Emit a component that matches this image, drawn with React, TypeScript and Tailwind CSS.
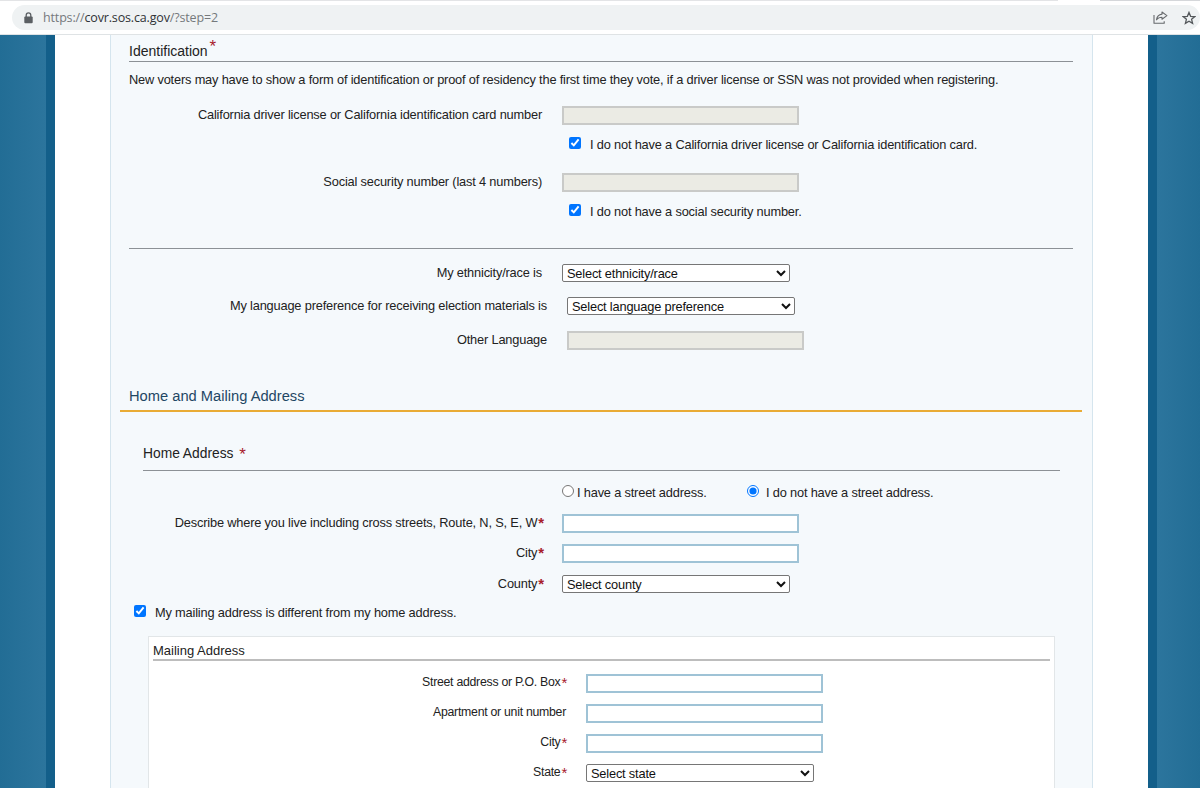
import React from "react";
import clsx from "clsx";

function Star({ className }: { className?: string }) {
  return <span className={clsx("text-[#a8202c]", className)}>*</span>;
}

function Row({
  label,
  required,
  className,
  labelClass = "w-[431px]",
  starClass = "ml-px align-[-1px] text-[15px] leading-none font-bold",
  children,
}: {
  label: string;
  required?: boolean;
  className?: string;
  labelClass?: string;
  starClass?: string;
  children: React.ReactNode;
}) {
  return (
    <div className={clsx("flex items-start", className)}>
      <label className={clsx("shrink-0 text-right whitespace-nowrap", labelClass)}>
        {label}
        {required && <Star className={starClass} />}
      </label>
      {children}
    </div>
  );
}

function TextInput({ disabled, className }: { disabled?: boolean; className?: string }) {
  return (
    <input
      type="text"
      disabled={disabled}
      className={clsx(
        "h-[19px] w-[237px] shrink-0 border-2",
        disabled ? "border-[#c9cac8] bg-[#ebebe4]" : "border-[#9fc3d6] bg-white",
        className
      )}
    />
  );
}

function Select({ text, className }: { text: string; className?: string }) {
  return (
    <select
      className={clsx(
        "h-[18px] w-[228px] shrink-0 rounded-[2px] border border-[#767676] bg-white text-[12.8px] leading-4 tracking-[-0.18px] text-[#111]",
        className
      )}
    >
      <option>{text}</option>
    </select>
  );
}

function Check({ text, className }: { text: string; className?: string }) {
  return (
    <label className={clsx("flex items-start whitespace-nowrap", className)}>
      <input type="checkbox" defaultChecked className="m-0 mr-[9px] size-3 shrink-0" />
      <span className="-mt-px">{text}</span>
    </label>
  );
}

function AddressBar() {
  return (
    <div className="flex h-[35px] flex-col border-b border-[#dfe3e5] bg-white">
      <div className="flex h-px justify-between">
        <div className="w-[1058px] bg-[#e3e4e6]" />
        <div className="w-[100px] bg-[#d5d7da]" />
      </div>
      <div className="mt-1 ml-3 flex h-[25px] items-center rounded-full bg-[#eff2f3] pr-[4px] pl-3">
        <svg width="9" height="12" viewBox="0 0 9 12" className="shrink-0">
          <path d="M2.2 5V3.2a2.3 2.3 0 0 1 4.6 0V5" fill="none" stroke="#5b5f63" strokeWidth="1.3" />
          <rect x="0.3" y="4.4" width="8.4" height="6.8" rx="1" fill="#5b5f63" />
        </svg>
        <span className="ml-[10px] font-['Open_Sans',sans-serif] text-[12.5px] leading-4 tracking-[-0.15px] text-[#75797c]">
          https://<span className="text-[#303336]">covr.sos.ca.gov</span>/?step=2
        </span>
        <svg
          width="15"
          height="13"
          viewBox="0 0 15 13"
          fill="none"
          stroke="#66696c"
          strokeWidth="1.1"
          strokeLinejoin="round"
          className="ml-auto shrink-0"
        >
          <path d="M1 4v8.2h10.2v-2" />
          <path d="M9 1l4.900 3.600L9 8.200V6.200C6.500 6.200 4.800 7 3.500 8.800 3.900 5.500 5.800 3.500 9 3.100z" />
        </svg>
        <svg
          width="14"
          height="14"
          viewBox="0 0 13 13"
          fill="none"
          stroke="#54585b"
          strokeWidth="1.2"
          className="ml-[14px] shrink-0"
        >
          <path d="M6.500 1.300l1.500 3.600 3.900.3-3 2.500.95 3.800L6.500 9.500l-3.350 2 .95-3.800-3-2.500 3.900-.3z" />
        </svg>
      </div>
    </div>
  );
}

export default function App() {
  return (
    <div className="h-[788px] w-[1200px] overflow-hidden bg-white font-['Liberation_Sans',Arial,sans-serif] text-[12.8px] leading-[17px] text-[#222]">
      <AddressBar />
      <div className="flex h-[753px] tracking-[-0.175px]">
        <div className="w-[46px] bg-linear-to-r from-[#226d95] to-[#2c759d]" />
        <div className="w-[9px] bg-[#135f8a]" />
        <div className="w-[55px]" />

        <main className="w-[983px] overflow-hidden border-x border-[#d5e5ee] bg-[#f5f9fc]">
          {/* Identification */}
          <section className="mr-[19px] ml-[18px]">
            <h2 className="flex h-[27px] items-start border-b border-[#8c9196] pt-2 text-[14px] tracking-normal">
              Identification
              <Star className="-mt-[5px] ml-[2px] text-[17px]" />
            </h2>
            <p className="pt-[9px] whitespace-nowrap">
              New voters may have to show a form of identification or proof of residency the first time they vote,
              if a driver license or SSN was not provided when registering.
            </p>
          </section>
          <Row label="California driver license or California identification card number" className="mt-[18px]">
            <TextInput disabled className="ml-5" />
          </Row>
          <Check
            text="I do not have a California driver license or California identification card."
            className="mt-3 ml-[458px]"
          />
          <Row label="Social security number (last 4 numbers)" className="mt-[20px]">
            <TextInput disabled className="ml-5" />
          </Row>
          <Check text="I do not have a social security number." className="mt-3 ml-[458px]" />
          <hr className="mr-[19px] ml-[18px] mt-[28px] border-[#8c9196]" />

          <Row label="My ethnicity/race is" className="mt-[15px] h-[33px]">
            <Select text="Select ethnicity/race" className="ml-5" />
          </Row>
          <Row
            label="My language preference for receiving election materials is"
            labelClass="w-[436px]"
            className="h-[34px]"
          >
            <Select text="Select language preference" className="ml-5" />
          </Row>
          <Row label="Other Language" labelClass="w-[436px]" className="h-[19px]">
            <TextInput disabled className="ml-5" />
          </Row>

          {/* Home and mailing address */}
          <h1 className="mr-[10px] ml-[9px] mt-[37px] h-[25px] border-b-2 border-[#e9ab35] pt-px pl-[9px] text-[14.7px] tracking-normal text-[#1f4764]">
            Home and Mailing Address
          </h1>
          <h2 className="ml-[32px] mt-[33px] h-[26px] w-[917px] border-b border-[#8c9196] text-[13.8px] tracking-normal">
            Home Address <Star className="ml-[2px] align-[-2px] text-[17px] leading-none" />
          </h2>
          <div className="mt-[13px] ml-[451px] flex h-[30px] items-start">
            <label className="flex w-[185px] items-start">
              <input type="radio" name="street" className="m-0 mt-px mr-[3px] size-3 shrink-0" />I have a street
              address.
            </label>
            <label className="flex items-start">
              <input type="radio" name="street" defaultChecked className="m-0 mt-px mr-[7px] size-3 shrink-0" />I do
              not have a street address.
            </label>
          </div>
          <Row
            label="Describe where you live including cross streets, Route, N, S, E, W"
            required
            labelClass="w-[433px]"
            className="h-[30px]"
          >
            <TextInput className="ml-[18px]" />
          </Row>
          <Row label="City" required labelClass="w-[433px]" className="h-[31px]">
            <TextInput className="ml-[18px]" />
          </Row>
          <Row label="County" required labelClass="w-[433px]" className="h-[18px]">
            <Select text="Select county" className="ml-[18px]" />
          </Row>
          <Check text="My mailing address is different from my home address." className="mt-[12px] ml-[23px]" />

          <section className="mt-[15px] ml-[37px] h-[180px] w-[907px] border border-[#e2e6e8] bg-white text-[12.3px] tracking-[-0.27px]">
            <h3 className="mx-[4px] h-[24px] border-b-2 border-[#bdbdbd] pt-[5px] text-[13px] tracking-normal">
              Mailing Address
            </h3>
            <Row
              label="Street address or P.O. Box"
              required
              labelClass="w-[418px]"
              starClass="ml-px align-[-2px] text-[15px] leading-none"
              className="mt-[13px] h-[30px]"
            >
              <TextInput className="ml-[19px]" />
            </Row>
            <Row label="Apartment or unit number" labelClass="w-[417px]" className="h-[30px]">
              <TextInput className="ml-[20px]" />
            </Row>
            <Row
              label="City"
              required
              labelClass="w-[418px]"
              starClass="ml-px align-[-2px] text-[15px] leading-none"
              className="h-[30px]"
            >
              <TextInput className="ml-[19px]" />
            </Row>
            <Row
              label="State"
              required
              labelClass="w-[418px]"
              starClass="ml-px align-[-2px] text-[15px] leading-none"
              className="h-[30px]"
            >
              <Select text="Select state" className="ml-[19px]" />
            </Row>
          </section>
        </main>

        <div className="w-[55px]" />
        <div className="w-[9px] bg-[#135f8a]" />
        <div className="w-[43px] bg-linear-to-r from-[#2c759d] to-[#226d95]" />
      </div>
    </div>
  );
}
